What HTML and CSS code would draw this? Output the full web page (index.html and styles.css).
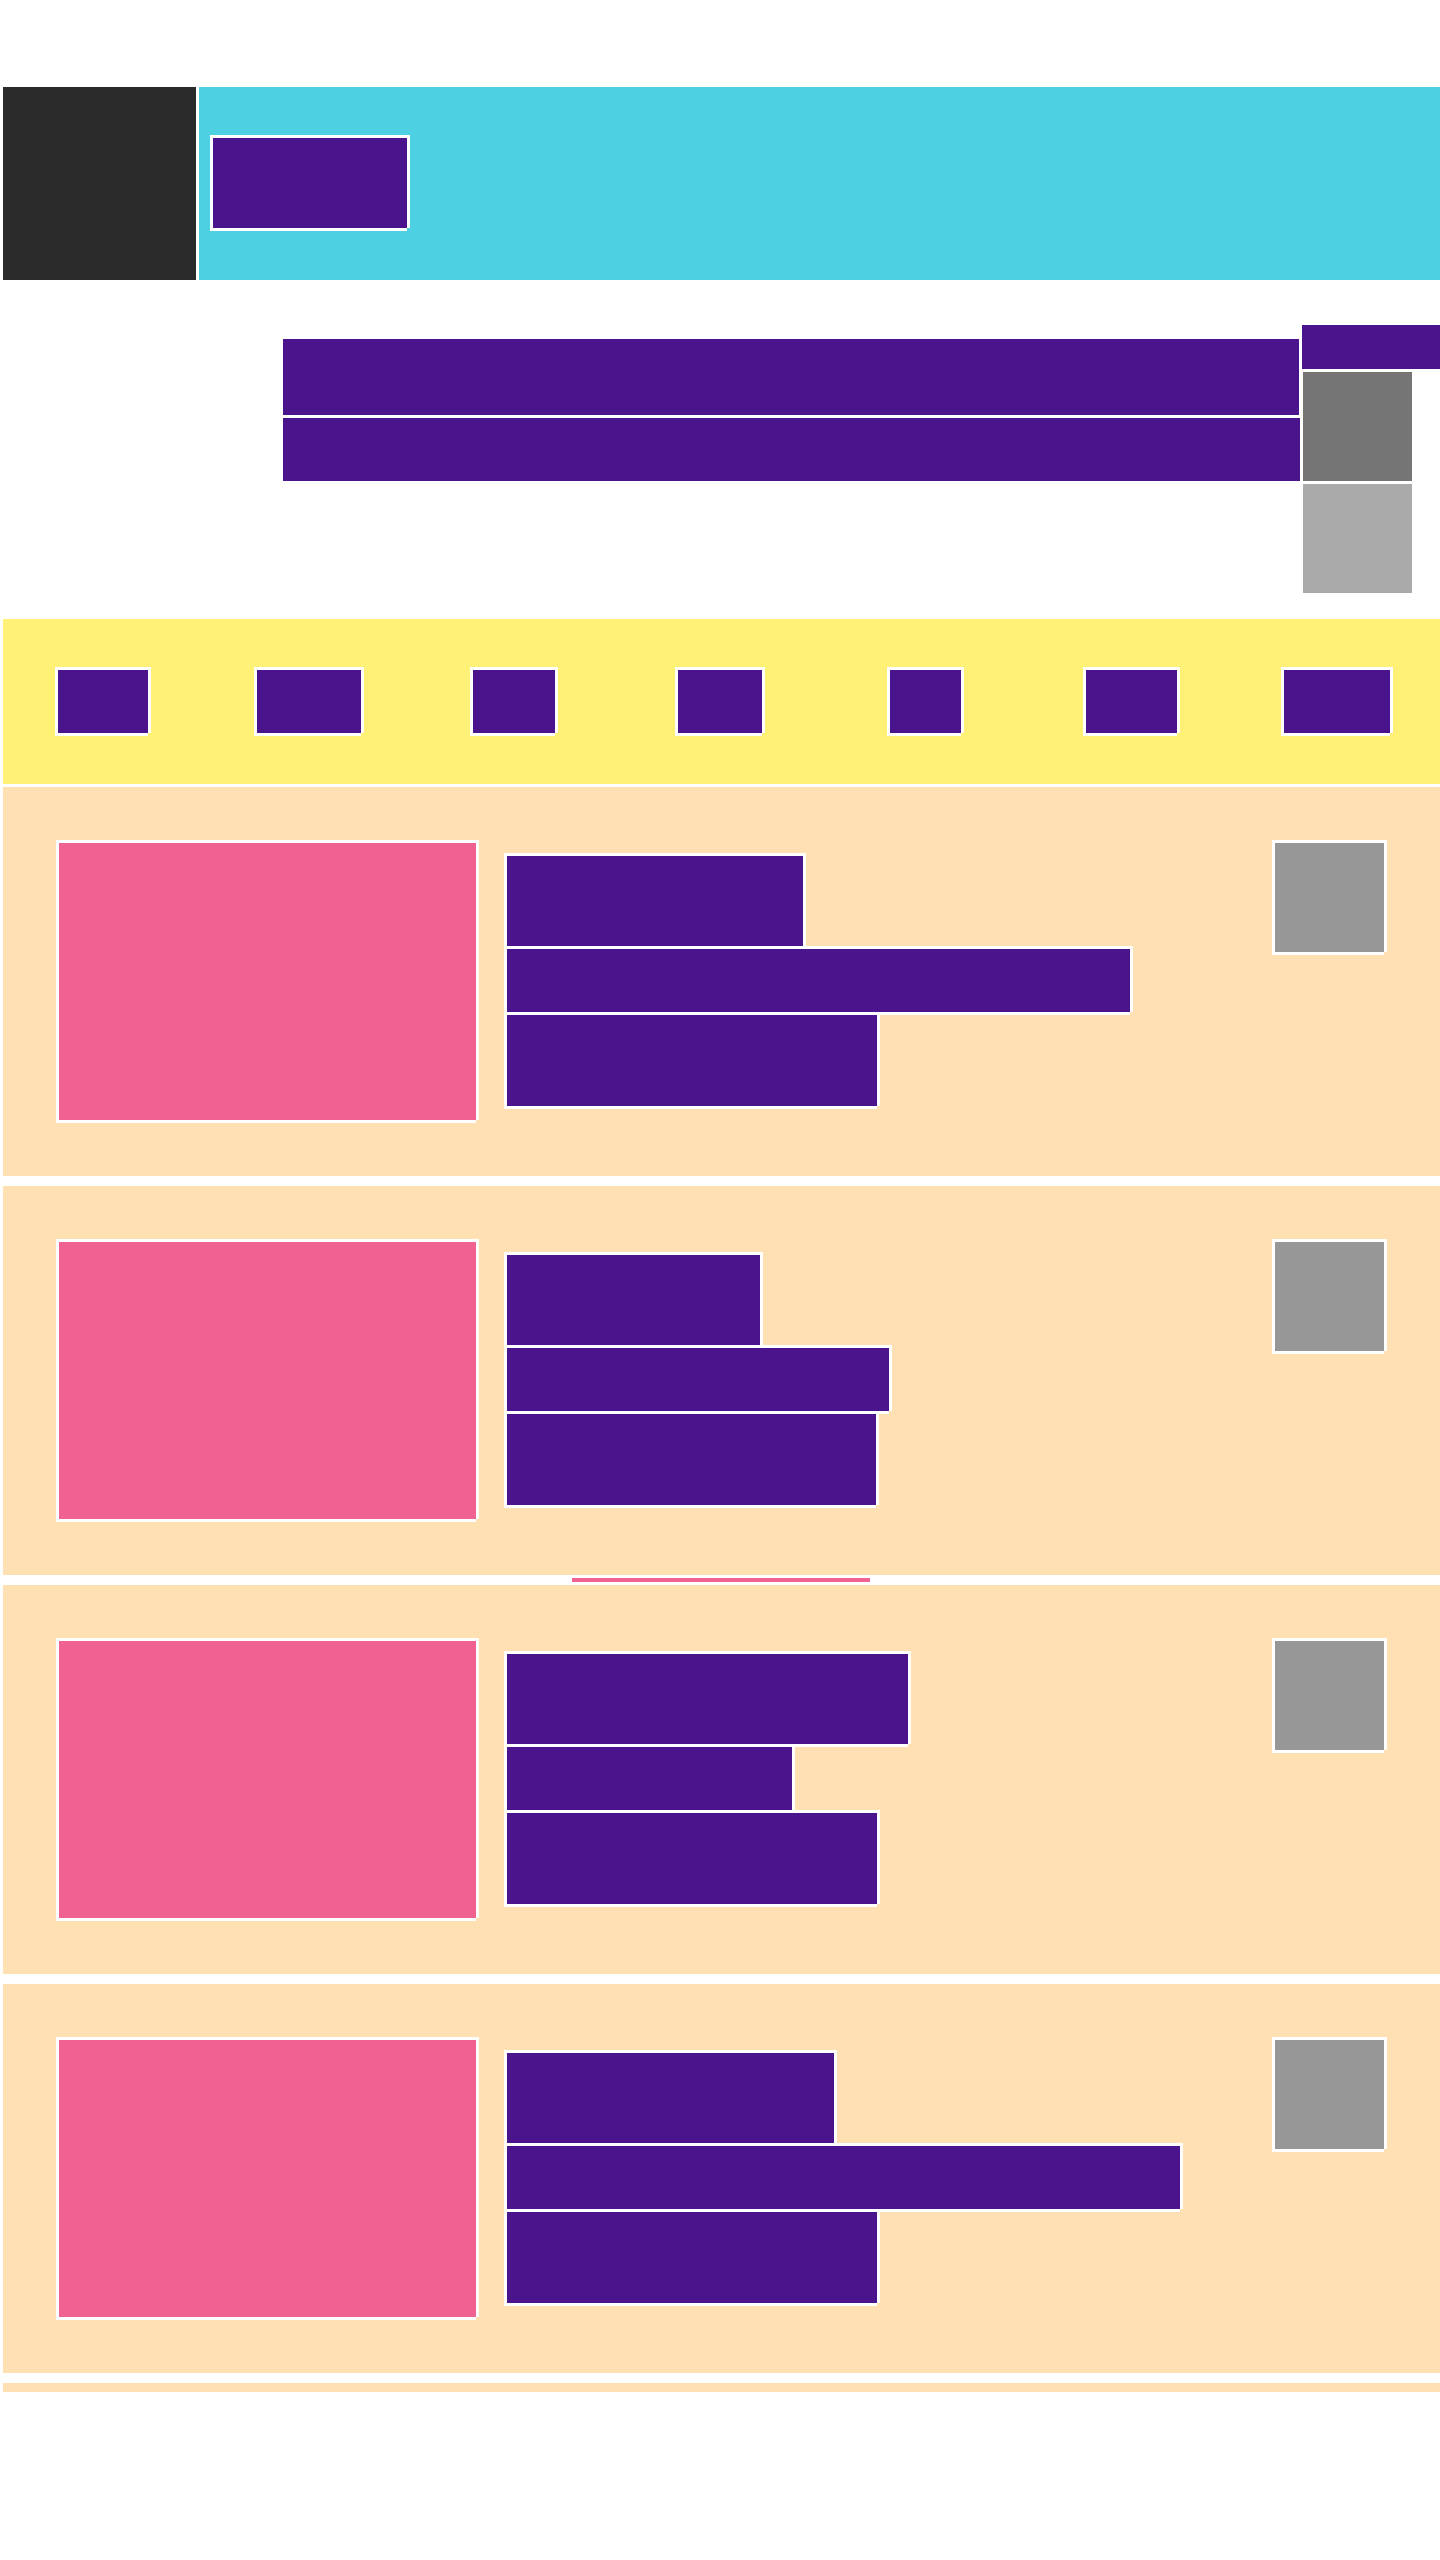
FILE: index.html
```html
<!DOCTYPE html>
<html lang="en">
<head>
<meta charset="utf-8">
<title>Layout</title>
<link rel="stylesheet" href="styles.css">
</head>
<body>
<div class="page">
  <header class="header">
    <div class="logo-box"></div>
    <div class="header-bar">
      <div class="block btn"></div>
    </div>
  </header>

  <section class="hero">
    <div class="hero-text">
      <div class="block bar bar-1"></div>
      <div class="block bar bar-2"></div>
    </div>
    <div class="hero-side">
      <div class="block side-tag"></div>
      <div class="block side-thumb dark"></div>
      <div class="block side-thumb light"></div>
    </div>
  </section>

  <nav class="nav">
    <div class="nav-track">
      <div class="block nav-item" style="width:90px"></div>
      <div class="block nav-item" style="width:104px"></div>
      <div class="block nav-item" style="width:82px"></div>
      <div class="block nav-item" style="width:84px"></div>
      <div class="block nav-item" style="width:71px"></div>
      <div class="block nav-item" style="width:91px"></div>
      <div class="block nav-item" style="width:106px"></div>
    </div>
  </nav>

  <div class="cards">
    <article class="card">
      <div class="block media"></div>
      <div class="card-body">
        <div class="block line l1" style="width:296px"></div>
        <div class="block line l2" style="width:623px"></div>
        <div class="block line l3" style="width:370px"></div>
      </div>
      <div class="block badge"></div>
    </article>
    <article class="card">
      <div class="block media"></div>
      <div class="card-body">
        <div class="block line l1" style="width:253px"></div>
        <div class="block line l2" style="width:382px"></div>
        <div class="block line l3" style="width:369px"></div>
      </div>
      <div class="block badge"></div>
      <div class="progress"></div>
    </article>
    <article class="card">
      <div class="block media"></div>
      <div class="card-body">
        <div class="block line l1" style="width:401px"></div>
        <div class="block line l2" style="width:285px"></div>
        <div class="block line l3" style="width:370px"></div>
      </div>
      <div class="block badge"></div>
    </article>
    <article class="card">
      <div class="block media"></div>
      <div class="card-body">
        <div class="block line l1" style="width:327px"></div>
        <div class="block line l2" style="width:673px"></div>
        <div class="block line l3" style="width:370px"></div>
      </div>
      <div class="block badge"></div>
    </article>
    <div class="card-empty"></div>
  </div>
</div>
</body>
</html>
```

FILE: styles.css
```css
html, body {
  margin: 0;
  padding: 0;
  background: #ffffff;
  font-family: "Liberation Sans", Arial, sans-serif;
}

.page {
  width: 1437px;
  padding: 87px 0 0 3px;
}

.block {
  box-sizing: border-box;
  flex: none;
  box-shadow:
    -3px -3px 0 #ffffff,
    3px -3px 0 #ffffff,
    3px 0 0 #ffffff,
    -3px 3px 0 #ffffff,
    0 3px 0 #ffffff;
}

/* Header */
.header {
  display: flex;
  gap: 3px;
  height: 193px;
}
.logo-box {
  width: 193px;
  background: #2b2b2b;
}
.header-bar {
  flex: 1;
  background: #4dd0e1;
  padding: 51px 0 0 14px;
}
.btn {
  width: 194px;
  height: 90px;
  background: #4a148c;
}

/* Hero */
.hero {
  display: flex;
  align-items: flex-start;
  height: 333px;
  margin-top: 3px;
  padding-left: 280px;
}
.hero-text {
  display: flex;
  flex-direction: column;
  align-items: flex-start;
  gap: 3px;
  margin-top: 56px;
}
.bar {
  background: #4a148c;
}
.bar-1 {
  width: 1016px;
  height: 76px;
}
.bar-2 {
  width: 1017px;
  height: 63px;
}
.hero-side {
  display: flex;
  flex-direction: column;
  align-items: flex-start;
  gap: 3px;
  margin-top: 42px;
  margin-left: 2px;
}
.side-tag {
  width: 138px;
  height: 44px;
  background: #4a148c;
}
.side-thumb {
  width: 109px;
  height: 109px;
  margin-left: 1px;
}
.side-thumb.dark {
  background: #757575;
}
.side-thumb.light {
  background: #aaaaaa;
}

/* Nav */
.nav {
  height: 165px;
  margin-top: 3px;
  background: #fff176;
  overflow: visible;
}
.nav-track {
  display: grid;
  grid-template-columns: repeat(7, 1fr);
  justify-items: center;
  align-items: center;
  width: 1440px;
  height: 165px;
  margin-left: -3px;
}
.nav-item {
  height: 63px;
  background: #4a148c;
}

/* Cards */
.cards {
  display: flex;
  flex-direction: column;
  gap: 10px;
  margin-top: 3px;
}
.card {
  position: relative;
  display: flex;
  align-items: flex-start;
  height: 389px;
  box-sizing: border-box;
  padding: 56px 56px 0;
  background: #ffe0b2;
}
.media {
  width: 417px;
  height: 277px;
  background: #f06292;
}
.card-body {
  display: flex;
  flex-direction: column;
  align-items: flex-start;
  gap: 3px;
  margin-top: 13px;
  margin-left: 31px;
}
.line {
  background: #4a148c;
}
.l1 {
  height: 90px;
}
.l2 {
  height: 63px;
}
.l3 {
  height: 91px;
}
.badge {
  margin-left: auto;
  width: 109px;
  height: 109px;
  background: #979797;
}
.progress {
  position: absolute;
  left: 569px;
  top: 392px;
  width: 298px;
  height: 4px;
  background: #f06292;
}
.card-empty {
  height: 9px;
  background: #ffe0b2;
}
```
